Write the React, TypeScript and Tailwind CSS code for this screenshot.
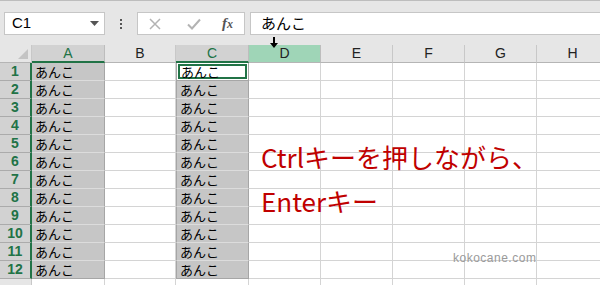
import { Fragment } from "react";

const cols = ["A", "B", "C", "D", "E", "F", "G", "H"];

const rows = [1, 2, 3, 4, 5, 6, 7, 8, 9, 10, 11, 12];

const jp = "font-['Noto_Sans_CJK_JP',sans-serif]";

function ColHeader({ k }: { k: string }) {
  if (k === "A" || k === "C") {
    return (
      <div className="flex h-[18px] items-center justify-center border-r border-b-2 border-r-[#bdbdbd] border-b-[#217346] bg-[#d2d2d2] text-[14px] text-[#217346]">
        {k}
      </div>
    );
  }
  if (k === "D") {
    return (
      <div className="flex h-[18px] items-center justify-center border-r border-b border-r-[#bdbdbd] border-b-[#b5b5b5] bg-[#9fd5b7] text-[14px] text-[#222]">
        {k}
      </div>
    );
  }
  return (
    <div className="flex h-[18px] items-center justify-center border-r border-b border-r-[#c8c8c8] border-b-[#b5b5b5] bg-[#e6e6e6] text-[14px] text-[#222]">
      {k}
    </div>
  );
}

function Cell({ col, row }: { col: string; row: number }) {
  if (col === "C" && row === 1) {
    return (
      <div className="h-[18px] border-r border-b border-l border-[#a6a6a6] bg-white p-px">
        <div className={`flex h-full items-center border-2 border-[#217346] pl-px text-[13px] leading-none text-black ${jp}`}>
          あんこ
        </div>
      </div>
    );
  }
  if (col === "A" || col === "C") {
    const edge = col === "C" ? "border-l border-l-[#a6a6a6]" : "";
    const last = row === 12 ? "border-b-[#a6a6a6]" : "border-b-[#dcdcdc]";
    return (
      <div className={`flex h-[18px] items-center border-r border-b border-r-[#a6a6a6] ${last} ${edge} bg-[#c6c6c6] pl-[3px] text-[13px] leading-none text-black ${jp}`}>
        あんこ
      </div>
    );
  }
  return <div className="h-[18px] border-r border-b border-[#d4d4d4] bg-white" />;
}

export default function App() {
  return (
    <div className="relative h-[285px] w-[600px] overflow-hidden bg-white font-['Liberation_Sans',Arial,sans-serif]">
      {/* ribbon / formula bar */}
      <div className="flex h-[45px] items-start border-t border-[#bdbdbd] bg-[#e6e6e6] pt-[11px]">
        <div className="ml-[4px] flex h-[23px] w-[101px] items-center justify-between border border-[#c6c6c6] bg-white pr-[5px] pl-[7px]">
          <span className="text-[15px] text-black">C1</span>
          <svg width="9" height="5" viewBox="0 0 9 5">
            <path d="M0 0h9L4.5 5z" fill="#555" />
          </svg>
        </div>
        <div className="flex h-[23px] w-[32px] flex-col items-center justify-center gap-[2px]">
          <span className="h-[2px] w-[2px] bg-[#555]" />
          <span className="h-[2px] w-[2px] bg-[#555]" />
          <span className="h-[2px] w-[2px] bg-[#555]" />
        </div>
        <div className="flex h-[23px] w-[108px] items-center border border-[#c6c6c6] bg-white">
          <svg className="ml-[11px]" width="12" height="12" viewBox="0 0 12 12">
            <path d="M1 1l10 10M11 1L1 11" stroke="#b3b3b3" strokeWidth="1.5" />
          </svg>
          <svg className="ml-[26px]" width="14" height="12" viewBox="0 0 14 12">
            <path d="M1 6.5l4 4L13 1.5" stroke="#b3b3b3" strokeWidth="2" fill="none" />
          </svg>
          <span className="ml-[21px] font-['Liberation_Serif',serif] text-[15px] font-bold text-[#555] italic">
            f<span className="text-[12px]">x</span>
          </span>
        </div>
        <div className={`ml-[5px] flex h-[23px] flex-1 items-center border-y border-l border-[#c6c6c6] bg-white pl-[10px] text-[15px] text-black ${jp}`}>
          あんこ
        </div>
      </div>

      {/* sheet */}
      <div className="grid grid-cols-[32px_73px_71px_73px_72px_72px_72px_72px_72px]">
        <div className="relative h-[18px] border-r border-b border-r-[#c8c8c8] border-b-[#b5b5b5] bg-[#e6e6e6]">
          <svg className="absolute right-[3px] bottom-[3px]" width="10" height="10" viewBox="0 0 10 10">
            <path d="M10 0v10H0z" fill="#c4c4c4" />
          </svg>
        </div>
        {cols.map((c) => (
          <ColHeader key={c} k={c} />
        ))}
        {rows.map((r) => (
          <Fragment key={r}>
            <div className="flex h-[18px] items-center justify-center border-r-2 border-b border-r-[#217346] border-b-[#ababab] bg-[#d2d2d2] text-[14px] font-bold text-[#217346]">
              {r}
            </div>
            {cols.map((c) => (
              <Cell key={c} col={c} row={r} />
            ))}
          </Fragment>
        ))}
        <div className="h-[18px] border-r border-b border-[#c8c8c8] bg-[#e6e6e6]" />
        {cols.map((c) => (
          <div key={c} className="h-[18px] border-r border-b border-[#d4d4d4]" />
        ))}
      </div>

      {/* annotation */}
      <div className={`absolute top-[140px] left-[261px] flex flex-col gap-[11px] text-[26px] leading-[33px] text-[#c00000] ${jp}`}>
        <span>Ctrlキーを押しながら、</span>
        <span>Enterキー</span>
      </div>
      <div className="absolute top-[249px] left-[453px] text-[12px] tracking-[0.5px] text-[#9a9a9a]">
        kokocane.com
      </div>

      {/* mouse pointer */}
      <svg className="absolute top-[37px] left-[270px]" width="8" height="11" viewBox="0 0 8 11">
        <path d="M3 0h2v6h3l-4 5-4-5h3z" fill="#000" />
      </svg>
    </div>
  );
}
